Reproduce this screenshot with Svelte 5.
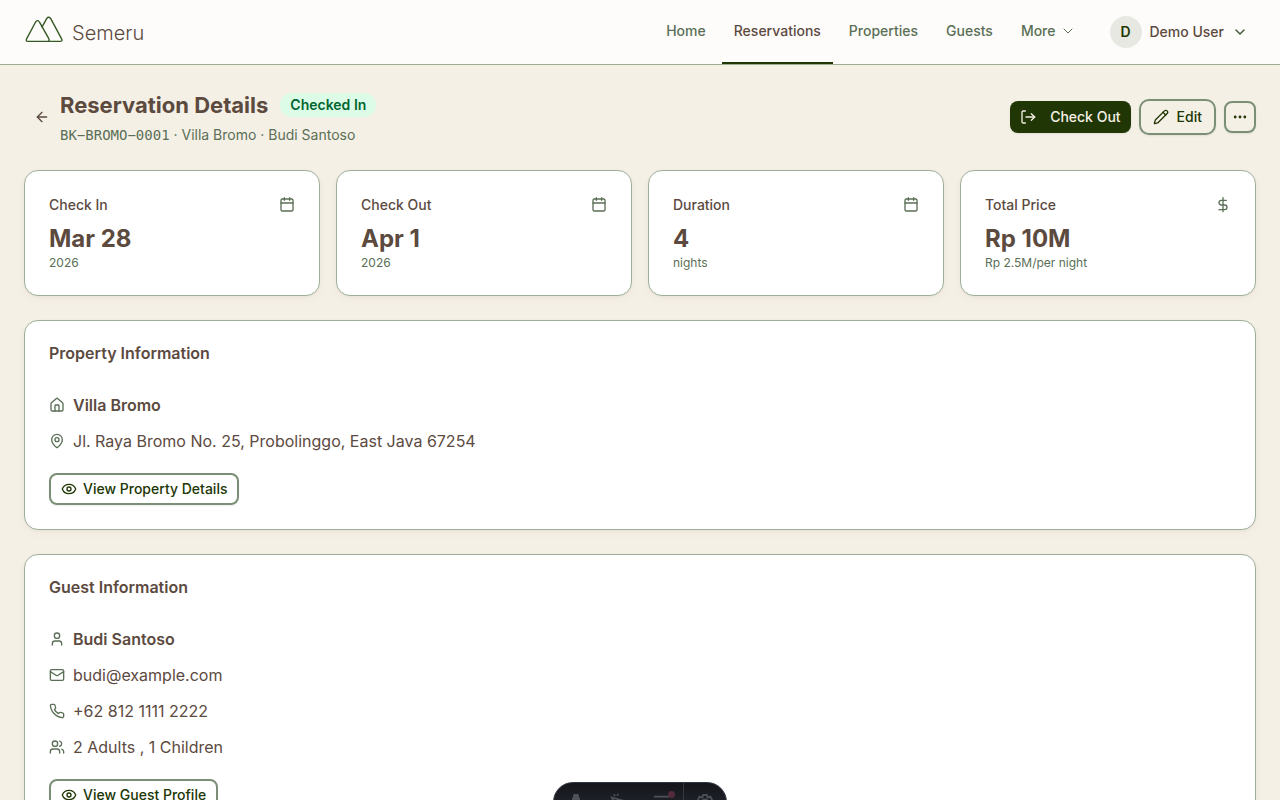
<script>
  const navLinks = ['Home', 'Reservations', 'Properties', 'Guests'];
  const current = 'Reservations';

  const stats = [
    { label: 'Check In', value: 'Mar 28', note: '2026', icon: 'calendar' },
    { label: 'Check Out', value: 'Apr 1', note: '2026', icon: 'calendar' },
    { label: 'Duration', value: '4', note: 'nights', icon: 'calendar' },
    { label: 'Total Price', value: 'Rp 10M', note: 'Rp 2.5M/per night', icon: 'dollar' }
  ];

  const sections = [
    {
      title: 'Property Information',
      rows: [
        { icon: 'home', text: 'Villa Bromo', strong: true },
        { icon: 'pin', text: 'Jl. Raya Bromo No. 25, Probolinggo, East Java 67254' }
      ],
      action: 'View Property Details'
    },
    {
      title: 'Guest Information',
      rows: [
        { icon: 'user', text: 'Budi Santoso', strong: true },
        { icon: 'mail', text: 'budi@example.com' },
        { icon: 'phone', text: '+62 812 1111 2222' },
        { icon: 'users', text: '2 Adults , 1 Children' }
      ],
      action: 'View Guest Profile'
    }
  ];

  const icons = {
    calendar: ['M8 1v4', 'M16 1v4', 'M5 3h14a2 2 0 0 1 2 2v14a2 2 0 0 1-2 2H5a2 2 0 0 1-2-2V5a2 2 0 0 1 2-2z', 'M3 9h18'],
    dollar: ['M12 1v21', 'M17 5H9.5a3.5 3.5 0 0 0 0 7h5a3.5 3.5 0 0 1 0 7H6'],
    home: ['M15 21v-8a1 1 0 0 0-1-1h-4a1 1 0 0 0-1 1v8', 'M3 10a2 2 0 0 1 .709-1.528l7-6a2 2 0 0 1 2.582 0l7 6A2 2 0 0 1 21 10v9a2 2 0 0 1-2 2H5a2 2 0 0 1-2-2z'],
    pin: ['M20 10c0 4.993-5.539 10.193-7.399 11.799a1 1 0 0 1-1.202 0C9.539 20.193 4 14.993 4 10a8 8 0 0 1 16 0', 'M15 10a3 3 0 1 1-6 0a3 3 0 0 1 6 0z'],
    user: ['M19 21v-2a4 4 0 0 0-4-4H9a4 4 0 0 0-4 4v2', 'M16 7a4 4 0 1 1-8 0a4 4 0 0 1 8 0z'],
    mail: ['M4 4h16a2 2 0 0 1 2 2v12a2 2 0 0 1-2 2H4a2 2 0 0 1-2-2V6a2 2 0 0 1 2-2z', 'm22 7-8.97 5.7a1.94 1.94 0 0 1-2.06 0L2 7'],
    phone: ['M22 16.92v3a2 2 0 0 1-2.18 2 19.79 19.79 0 0 1-8.63-3.07 19.5 19.5 0 0 1-6-6 19.79 19.79 0 0 1-3.07-8.67A2 2 0 0 1 4.11 2h3a2 2 0 0 1 2 1.72 12.84 12.84 0 0 0 .7 2.81 2 2 0 0 1-.45 2.11L8.09 9.91a16 16 0 0 0 6 6l1.27-1.27a2 2 0 0 1 2.11-.45 12.84 12.84 0 0 0 2.81.7A2 2 0 0 1 22 16.92z'],
    users: ['M16 21v-2a4 4 0 0 0-4-4H6a4 4 0 0 0-4 4v2', 'M13 7a4 4 0 1 1-8 0a4 4 0 0 1 8 0z', 'M22 21v-2a4 4 0 0 0-3-3.87', 'M16 3.13a4 4 0 0 1 0 7.75'],
    eye: ['M2.062 12.348a1 1 0 0 1 0-.696 10.75 10.75 0 0 1 19.876 0 1 1 0 0 1 0 .696 10.75 10.75 0 0 1-19.876 0', 'M15 12a3 3 0 1 1-6 0a3 3 0 0 1 6 0z'],
    back: ['m12 19-7-7 7-7', 'M19 12H5'],
    exit: ['M8 3H5a2 2 0 0 0-2 2v14a2 2 0 0 0 2 2h3', 'm17 17 5-5-5-5', 'M22 12H9'],
    pencil: ['M21.174 6.812a1 1 0 0 0-3.986-3.987L3.842 16.174a2 2 0 0 0-.5.83l-1.321 4.352a.5.5 0 0 0 .623.622l4.353-1.32a2 2 0 0 0 .83-.497z', 'm15 5 4 4'],
    chevron: ['m4 8 8 8 8-8']
  };
</script>

{#snippet icon(name)}
  <svg class="icon" viewBox="0 0 24 24" aria-hidden="true">
    {#each icons[name] as d}<path {d} />{/each}
  </svg>
{/snippet}

<header class="topbar">
  <a class="brand" href="#home">
    <svg class="logo" viewBox="0 0 40 28" aria-hidden="true">
      <path d="M15.2 5.6 Q13.4 3.4 11.6 6 L2.6 22.8 Q1.4 25.4 3.8 25.4 H36 Q39 25.4 37.6 22.8 L26.6 2.4 Q24.6 0 22.8 2.4 L17.8 11.4" />
      <path d="M15.2 5.6 L24.8 22.6 Q25.6 24.2 24.6 25.4" />
    </svg>
    <span>Semeru</span>
  </a>
  <div class="topbar-right">
    <nav>
      {#each navLinks as link}
        <a class="nav-item" class:active={link === current} href="#{link.toLowerCase()}">{link}</a>
      {/each}
      <button class="nav-item more">More {@render icon('chevron')}</button>
    </nav>
    <button class="account">
      <span class="avatar">D</span>
      <span>Demo User</span>
      {@render icon('chevron')}
    </button>
  </div>
</header>

<main>
  <div class="page-head">
    <a class="back" href="#reservations" aria-label="Back">{@render icon('back')}</a>
    <div class="heading">
      <div class="title-row">
        <h1>Reservation Details</h1>
        <span class="badge">Checked In</span>
      </div>
      <p class="subtitle"><span class="code">BK−BROMO−0001</span> · Villa Bromo · Budi Santoso</p>
    </div>
    <div class="actions">
      <button class="btn primary">{@render icon('exit')} Check Out</button>
      <button class="btn outline large">{@render icon('pencil')} Edit</button>
      <button class="btn outline square" aria-label="More actions">
        <svg class="dots" viewBox="0 0 16 16" aria-hidden="true">
          <circle cx="3.2" cy="8" r="1.4" /><circle cx="8" cy="8" r="1.4" /><circle cx="12.8" cy="8" r="1.4" />
        </svg>
      </button>
    </div>
  </div>

  <div class="stats">
    {#each stats as stat}
      <section class="card stat">
        <div class="stat-head"><h2>{stat.label}</h2>{@render icon(stat.icon)}</div>
        <strong>{stat.value}</strong>
        <small>{stat.note}</small>
      </section>
    {/each}
  </div>

  {#each sections as section}
    <section class="card info">
      <h2>{section.title}</h2>
      <ul>
        {#each section.rows as row}
          <li class:strong={row.strong}>{@render icon(row.icon)}<span>{row.text}</span></li>
        {/each}
      </ul>
      <button class="btn outline view">{@render icon('eye')} {section.action}</button>
    </section>
  {/each}
</main>

<div class="toolbar">
  <button aria-label="Menu">
    <svg viewBox="0 0 20 20"><path class="solid" d="M7.5 1h5L18 18l-5-2q-3-3-6 0l-5 2z" /></svg>
  </button>
  <button aria-label="Inspect">
    <svg viewBox="0 0 20 20"><path d="M2 5l14 4-5 3-3 6zM4 2l2 1M9 1l-1 2M2 8l-1 2" /></svg>
  </button>
  <button aria-label="Audit">
    <svg viewBox="0 0 20 20"><path d="M1 4h17M12 9h6M12 14h6M2 11l2 3 4-5" /></svg>
    <span class="alert"></span>
  </button>
  <button class="split" aria-label="Settings">
    <svg viewBox="0 0 20 20"><path d="M8 2h4l1 3 3-1 2 4-2 2 2 3-2 3-3-1-1 3H8l-1-3-3 1-2-3 2-3-2-2 2-4 3 1z" /><circle cx="10" cy="10" r="3" /></svg>
  </button>
</div>

<style>
  :global(body) {
    background: #f5f0e6;
    color: #5c4a3f;
    font: 14px/20px Inter, sans-serif;
  }

  :global(html) {
    scrollbar-width: none;
  }

  a {
    color: inherit;
    text-decoration: none;
  }

  button {
    margin: 0;
    padding: 0;
    border: 0;
    background: none;
    color: inherit;
    font: inherit;
    cursor: pointer;
  }

  h1, h2, p, ul {
    margin: 0;
    padding: 0;
  }

  .icon {
    flex: none;
    width: 16px;
    height: 16px;
    fill: none;
    stroke: currentColor;
    stroke-width: 2;
    stroke-linecap: round;
    stroke-linejoin: round;
  }

  .topbar {
    display: flex;
    justify-content: space-between;
    height: 64px;
    padding: 0 24px;
    border-bottom: 1px solid #9cab92;
    background: #fdfcfa;
  }

  .brand {
    display: flex;
    align-items: center;
    gap: 8px;
    padding-top: 2px;
    font-size: 20px;
    line-height: 28px;
    font-weight: 300;
  }

  .logo {
    width: 40px;
    height: 28px;
    margin-bottom: 6px;
    fill: none;
    stroke: #365a24;
    stroke-width: 1.4;
    stroke-linejoin: round;
  }

  .topbar-right {
    display: flex;
    gap: 24px;
  }

  nav {
    display: flex;
    gap: 4px;
  }

  .nav-item {
    display: flex;
    align-items: center;
    box-sizing: border-box;
    padding: 0 12px;
    border-bottom: 2px solid transparent;
    color: #5a6f56;
    font-weight: 500;
  }

  .nav-item.active {
    border-color: #203604;
    color: #5c4a3f;
  }

  .more .icon {
    width: 12px;
    height: 12px;
    margin-left: 6px;
  }

  .account {
    display: flex;
    align-items: center;
    gap: 8px;
    padding-right: 10px;
    font-weight: 500;
  }

  .account .icon {
    width: 12px;
    height: 12px;
    margin-left: 2px;
    stroke: #45593a;
    stroke-width: 3;
  }

  .avatar {
    width: 32px;
    border-radius: 50%;
    background: #e7e8e1;
    color: #203604;
    font-weight: 600;
    line-height: 32px;
    text-align: center;
  }

  main {
    display: flex;
    flex-direction: column;
    gap: 24px;
    padding: 24px;
  }

  .page-head {
    display: flex;
    align-items: center;
    padding-bottom: 1px;
  }

  .back {
    display: flex;
    padding: 10px;
  }

  .heading {
    flex: 1;
  }

  .title-row {
    display: flex;
    align-items: center;
    gap: 12px;
    margin-bottom: 4px;
  }

  h1 {
    font-size: 22px;
    line-height: 32px;
    font-weight: 700;
  }

  .badge {
    padding: 2px 10px;
    border-radius: 12px;
    background: #dcfce7;
    color: #016630;
    font-weight: 600;
  }

  .subtitle {
    color: #5a6f56;
  }

  .code {
    font-family: "DejaVu Sans Mono", monospace;
    line-height: 16px;
  }

  .actions {
    display: flex;
    align-items: center;
    gap: 8px;
  }

  .btn {
    display: flex;
    align-items: center;
    justify-content: center;
    box-sizing: border-box;
    height: 32px;
    border-radius: 8px;
    font-weight: 500;
    box-shadow: 0 1px 2px rgb(0 0 0 / 0.08);
  }

  .primary {
    gap: 14px;
    padding: 0 10px;
    background: #203604;
    color: #f5f0e6;
  }

  .outline {
    gap: 6px;
    padding: 0 10px;
    border: 2px solid #7a8f76;
    color: #203604;
  }

  .large {
    gap: 8px;
    height: 36px;
    padding: 0 12px;
    border-radius: 10px;
  }

  .square {
    width: 32px;
    padding: 0;
  }

  .dots {
    width: 16px;
    height: 16px;
    fill: #203604;
  }

  .stats {
    display: grid;
    grid-template-columns: repeat(4, 1fr);
    gap: 16px;
  }

  .card {
    padding: 24px;
    border: 1px solid #9fae98;
    border-radius: 14px;
    background: #fff;
    box-shadow: 0 1px 3px rgb(92 74 63 / 0.06), 0 4px 8px rgb(92 74 63 / 0.03);
  }

  .stat {
    display: flex;
    flex-direction: column;
  }

  .stat-head {
    display: flex;
    align-items: center;
    justify-content: space-between;
    margin-bottom: 8px;
  }

  .stat-head h2 {
    font-size: 14px;
    font-weight: 500;
  }

  .card .icon {
    color: #5a6f56;
  }

  .stat strong {
    font-size: 24px;
    line-height: 32px;
    font-weight: 700;
  }

  .stat small {
    color: #5a6f56;
    font-size: 12px;
    line-height: 16px;
  }

  .info h2 {
    margin-bottom: 32px;
    font-size: 16px;
    line-height: 16px;
    font-weight: 600;
  }

  .info ul {
    display: flex;
    flex-direction: column;
    gap: 12px;
    margin-bottom: 20px;
    list-style: none;
  }

  .info li {
    display: flex;
    align-items: center;
    gap: 8px;
    font-size: 16px;
    line-height: 24px;
  }

  .info .strong {
    font-weight: 600;
  }

  .card .view .icon {
    color: #203604;
  }

  .toolbar {
    position: fixed;
    bottom: -22px;
    left: 50%;
    display: flex;
    box-sizing: border-box;
    height: 40px;
    overflow: hidden;
    border: 1px solid #343841;
    border-radius: 20px;
    background: linear-gradient(180deg, #13151a, #2a2d36);
    transform: translateX(-50%);
  }

  .toolbar button {
    position: relative;
    display: grid;
    place-items: center;
    width: 43px;
  }

  .toolbar svg {
    width: 18px;
    height: 18px;
    fill: none;
    stroke: #505259;
    stroke-width: 2;
  }

  .toolbar .solid {
    fill: #505259;
    stroke: none;
  }

  .toolbar .split {
    border-left: 1px solid #343841;
  }

  .alert {
    position: absolute;
    top: 8px;
    right: 8px;
    width: 7px;
    height: 7px;
    border-radius: 50%;
    background: #542b3d;
  }
</style>
